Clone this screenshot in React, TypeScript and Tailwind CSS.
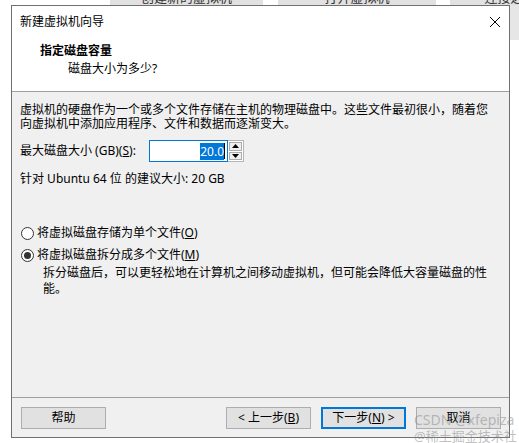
import React from 'react';

const font = "font-['Noto_Sans','Noto_Sans_CJK_SC',sans-serif]";

function Tab({ label, className }: { label: string; className: string }) {
    return (
        <div className={`h-[5px] shrink-0 overflow-hidden bg-[#e1e1e1] ${className}`}>
            <div className="-mt-[10px] text-center text-[13px] leading-[14px] text-[#333]">{label}</div>
        </div>
    );
}

function Button({ children, primary }: { children: React.ReactNode; primary?: boolean }) {
    return (
        <button
            className={`w-[85px] h-[22px] flex items-center justify-center text-[12px] leading-[14px] text-black bg-[#e1e1e1] ${
                primary ? 'border-2 border-[#0078d7]' : 'border border-[#adadad]'
            }`}
        >
            {children}
        </button>
    );
}

function Radio({ checked, children }: { checked?: boolean; children: React.ReactNode }) {
    return (
        <div className="flex items-center h-[16px]">
            <div className="ml-[1px] w-[13px] h-[13px] rounded-full border border-[#333] bg-white flex items-center justify-center">
                {checked && <div className="w-[7px] h-[7px] rounded-full bg-[#333]" />}
            </div>
            <span className="ml-[3px] leading-[16px]">{children}</span>
        </div>
    );
}

export default function App() {
    return (
        <div className={`relative w-[519px] h-[443px] overflow-hidden bg-white text-[12px] text-black ${font}`}>
            {/* window behind the dialog */}
            <div className="flex h-[5px]">
                <div className="w-[110px] shrink-0" />
                <Tab label="创建新的虚拟机" className="w-[153px]" />
                <div className="w-[15px] shrink-0" />
                <Tab label="打开虚拟机" className="w-[158px]" />
                <div className="w-[14px] shrink-0" />
                <Tab label="连接远程服务器" className="w-[160px]" />
            </div>

            <div className="flex">
                <div className="w-[11px] shrink-0" />

                {/* dialog */}
                <div className="w-[499px] h-[433px] shrink-0 flex flex-col border border-[#707070] bg-[#f0f0f0]">
                    <div className="bg-white">
                        <div className="h-[31px] flex items-center justify-between pl-[8px] pr-[9px]">
                            <span className="leading-[14px]">新建虚拟机向导</span>
                            <svg width="10" height="10" viewBox="0 0 10 10" stroke="#000" strokeWidth="1">
                                <path d="M0 0L10 10M10 0L0 10" />
                            </svg>
                        </div>
                        <div className="h-[54px] pl-[28px] pt-[6px]">
                            <div className="font-bold leading-[16px]">指定磁盘容量</div>
                            <div className="mt-[2px] pl-[28px] leading-[16px]">磁盘大小为多少?</div>
                        </div>
                    </div>
                    <div className="h-px bg-[#a0a0a0]" />

                    {/* body */}
                    <div className="flex-1 pl-[8px] pt-[11px]">
                        <p className="w-[475px] leading-[14px]">
                            虚拟机的硬盘作为一个或多个文件存储在主机的物理磁盘中。这些文件最初很小，随着您向虚拟机中添加应用程序、文件和数据而逐渐变大。
                        </p>

                        <div className="mt-[9px] flex items-center h-[22px]">
                            <span className="w-[129px] leading-[14px]">
                                最大磁盘大小 (GB)(<span className="underline">S</span>):
                            </span>
                            <div className="w-[79px] h-[22px] flex items-center justify-end pr-[2px] border border-[#0078d7] bg-white">
                                <span className="bg-[#0078d7] text-white leading-[17px]">20.0</span>
                                <span className="w-px h-[16px] bg-black" />
                            </div>
                            <div className="w-[16px] h-[22px] flex flex-col gap-px p-px border border-[#b5b5b5] border-l-0 bg-white">
                                <div className="flex-1 flex items-center justify-center border border-[#adadad] bg-[#efefef]">
                                    <svg width="7" height="4" viewBox="0 0 7 4">
                                        <path d="M3.5 0L7 4H0Z" fill="#000" />
                                    </svg>
                                </div>
                                <div className="flex-1 flex items-center justify-center border border-[#adadad] bg-[#efefef]">
                                    <svg width="7" height="4" viewBox="0 0 7 4">
                                        <path d="M0 0H7L3.5 4Z" fill="#000" />
                                    </svg>
                                </div>
                            </div>
                        </div>

                        <p className="mt-[10px] leading-[14px]">针对 Ubuntu 64 位 的建议大小: 20 GB</p>

                        <div className="mt-[39px]">
                            <Radio>
                                将虚拟磁盘存储为单个文件(<span className="underline">O</span>)
                            </Radio>
                        </div>
                        <div className="mt-[6px]">
                            <Radio checked>
                                将虚拟磁盘拆分成多个文件(<span className="underline">M</span>)
                            </Radio>
                        </div>
                        <p className="mt-[2px] pl-[23px] w-[472px] leading-[16px]">
                            拆分磁盘后，可以更轻松地在计算机之间移动虚拟机，但可能会降低大容量磁盘的性能。
                        </p>
                    </div>

                    <div className="h-px bg-[#a0a0a0]" />

                    {/* footer */}
                    <div className="h-[39px] flex items-start pt-[9px] pl-[9px] pr-[8px]">
                        <Button>帮助</Button>
                        <div className="flex-1" />
                        <div className="flex gap-[10px]">
                            <Button>
                                &lt; 上一步(<span className="underline">B</span>)
                            </Button>
                            <Button primary>
                                下一步(<span className="underline">N</span>) &gt;
                            </Button>
                            <Button>取消</Button>
                        </div>
                    </div>
                </div>

                <div className="w-[9px] h-[35px] shrink-0 bg-[#e6e6e6]" />
            </div>

            {/* watermark */}
            <div className="absolute left-[414px] top-[412px] text-[rgba(140,140,140,0.55)] pointer-events-none">
                <div className="text-[14px] leading-[16px]">CSDN @xfepiza</div>
                <div className="text-[13px] leading-[16px]">@稀土掘金技术社区</div>
            </div>
        </div>
    );
}
